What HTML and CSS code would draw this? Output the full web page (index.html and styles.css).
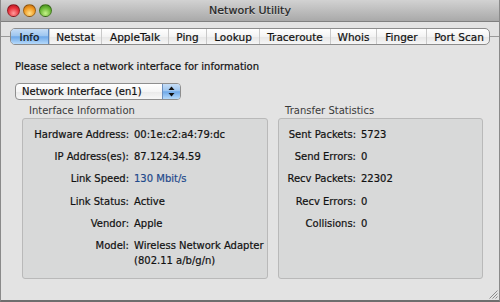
FILE: index.html
```html
<!DOCTYPE html>
<html lang="en">
<head>
    <meta charset="UTF-8">
    <title>Network Utility</title>
    <link rel="stylesheet" href="styles.css">
</head>
<body>
    <div class="window">
        <div class="titlebar">
            <div class="lights">
                <span class="light red"></span>
                <span class="light orange"></span>
                <span class="light green"></span>
            </div>
            <div class="title">Network Utility</div>
        </div>

        <div class="tabbar">
            <div class="tabs">
                <div class="tab selected">Info</div>
                <div class="tab">Netstat</div>
                <div class="tab">AppleTalk</div>
                <div class="tab">Ping</div>
                <div class="tab">Lookup</div>
                <div class="tab">Traceroute</div>
                <div class="tab">Whois</div>
                <div class="tab">Finger</div>
                <div class="tab">Port Scan</div>
            </div>
        </div>

        <div class="content">
            <p class="prompt">Please select a network interface for information</p>

            <div class="popup">
                <span class="popup-label">Network Interface (en1)</span>
                <span class="popup-arrows">
                    <svg width="7" height="11" viewBox="0 0 7 11">
                        <path d="M3.5 0.5 L6.5 4 L0.5 4 Z" fill="#111"/>
                        <path d="M3.5 10.5 L6.5 7 L0.5 7 Z" fill="#111"/>
                    </svg>
                </span>
            </div>

            <div class="groups">
                <div class="group">
                    <div class="group-title">Interface Information</div>
                    <div class="box info-box">
                        <span class="key">Hardware Address:</span><span class="val">00:1e:c2:a4:79:dc</span>
                        <span class="key">IP Address(es):</span><span class="val">87.124.34.59</span>
                        <span class="key">Link Speed:</span><span class="val link">130 Mbit/s</span>
                        <span class="key">Link Status:</span><span class="val">Active</span>
                        <span class="key">Vendor:</span><span class="val">Apple</span>
                        <span class="key">Model:</span><span class="val">Wireless Network Adapter<br>(802.11 a/b/g/n)</span>
                    </div>
                </div>
                <div class="group">
                    <div class="group-title">Transfer Statistics</div>
                    <div class="box stats-box">
                        <span class="key">Sent Packets:</span><span class="val">5723</span>
                        <span class="key">Send Errors:</span><span class="val">0</span>
                        <span class="key">Recv Packets:</span><span class="val">22302</span>
                        <span class="key">Recv Errors:</span><span class="val">0</span>
                        <span class="key">Collisions:</span><span class="val">0</span>
                    </div>
                </div>
            </div>
        </div>

        <div class="grip">
            <svg width="10" height="10" viewBox="0 0 10 10">
                <path d="M9.5 1.5 L1.5 9.5 M9.5 4.5 L4.5 9.5 M9.5 7.5 L7.5 9.5" stroke="#8c8c8c" stroke-width="1"/>
            </svg>
        </div>
    </div>
</body>
</html>
```

FILE: styles.css
```css
body {
    margin: 0;
    font-family: 'DejaVu Sans', 'Noto Sans', sans-serif;
    font-size: 10px;
    color: #111;
    -webkit-text-stroke: 0.2px;
}

.window {
    position: relative;
    width: 500px;
    height: 302px;
    box-sizing: border-box;
    background: #e3e3e3;
    border-left: 1px solid #8a8a8a;
    border-right: 1px solid #8a8a8a;
    border-bottom: 2px solid #6e6e6e;
    overflow: hidden;
}

/* title bar */
.titlebar {
    height: 22px;
    box-sizing: border-box;
    background: linear-gradient(#d2d2d2, #a9a9a9);
    border-bottom: 1px solid #808080;
    display: flex;
    align-items: center;
    position: relative;
}

.lights {
    display: flex;
    gap: 3px;
    padding-left: 6px;
}

.light {
    width: 13px;
    height: 13px;
    border-radius: 50%;
    box-sizing: border-box;
    border: 1px solid rgba(0, 0, 0, 0.35);
}

.red {
    background: radial-gradient(circle at 50% 75%, #ff9c9c 0, #e8303a 55%, #a4101a 100%);
}

.orange {
    background: radial-gradient(circle at 50% 75%, #ffe08a 0, #f19a22 55%, #b45e08 100%);
}

.green {
    background: radial-gradient(circle at 50% 75%, #c6f28a 0, #6bb836 55%, #367a12 100%);
}

.title {
    position: absolute;
    left: 0;
    right: 0;
    text-align: center;
    font-size: 11px;
    color: #1e1e1e;
    text-shadow: 0 1px 0 rgba(255, 255, 255, 0.4);
}

/* tabs */
.tabbar {
    position: relative;
    margin-top: 6px;
    padding-left: 9px;
}

.tabbar::before {
    content: "";
    position: absolute;
    left: 0;
    right: 0;
    top: 8px;
    border-top: 1px solid #9a9a9a;
}

.tabs {
    position: relative;
    display: grid;
    grid-template-columns: 38px 52px 67px 38px 53px 71px 46px 50px 65px;
    width: 480px;
    height: 17px;
    box-sizing: border-box;
    border: 1px solid #8c8c8c;
    border-radius: 5px;
    background: linear-gradient(#ffffff, #f3f3f3 50%, #e6e6e6 51%, #f6f6f6);
    overflow: hidden;
}

.tab {
    display: flex;
    align-items: center;
    justify-content: center;
    font-size: 10.5px;
    color: #111;
    border-left: 1px solid #c9c9c9;
}

.tab:first-child {
    border-left: none;
}

.tab.selected {
    background: linear-gradient(#c6ddf6, #9ec6f0 45%, #6ea8e8 52%, #b6dafb);
    border-right: 1px solid #5b86bd;
}

/* content */
.content {
    padding: 0 0 0 14px;
}

.prompt {
    margin: 15px 0 0;
    line-height: 14px;
}

.popup {
    margin-top: 9px;
    width: 166px;
    height: 17px;
    box-sizing: border-box;
    border: 1px solid #8e8e8e;
    border-radius: 4px;
    background: linear-gradient(#ffffff, #f5f5f5 50%, #e9e9e9 51%, #f7f7f7);
    display: flex;
    overflow: hidden;
}

.popup-label {
    flex: 1;
    padding-left: 6px;
    line-height: 15px;
}

.popup-arrows {
    width: 17px;
    display: flex;
    align-items: center;
    justify-content: center;
    background: linear-gradient(#c6ddf6, #9ec6f0 45%, #6ea8e8 52%, #b6dafb);
    border-left: 1px solid #6b8fbf;
}

.groups {
    display: flex;
    gap: 10px;
    margin-top: 4px;
    padding-left: 7px;
}

.group-title {
    padding-left: 7px;
    line-height: 14px;
    color: #3a3a3a;
    -webkit-text-stroke: 0;
}

.box {
    height: 161px;
    box-sizing: border-box;
    border: 1px solid #b9b9b9;
    border-radius: 3px;
    background: #d8d9d9;
    display: grid;
    column-gap: 5px;
    row-gap: 7.4px;
    align-content: start;
    padding-top: 7.5px;
    line-height: 15px;
}

.info-box {
    width: 246px;
    grid-template-columns: 106px 1fr;
}

.stats-box {
    width: 205px;
    grid-template-columns: 77px 1fr;
}

.key {
    text-align: right;
}

.val.link {
    color: #1f4a8c;
}

.grip {
    position: absolute;
    right: 1px;
    bottom: 1px;
    line-height: 0;
}
```
